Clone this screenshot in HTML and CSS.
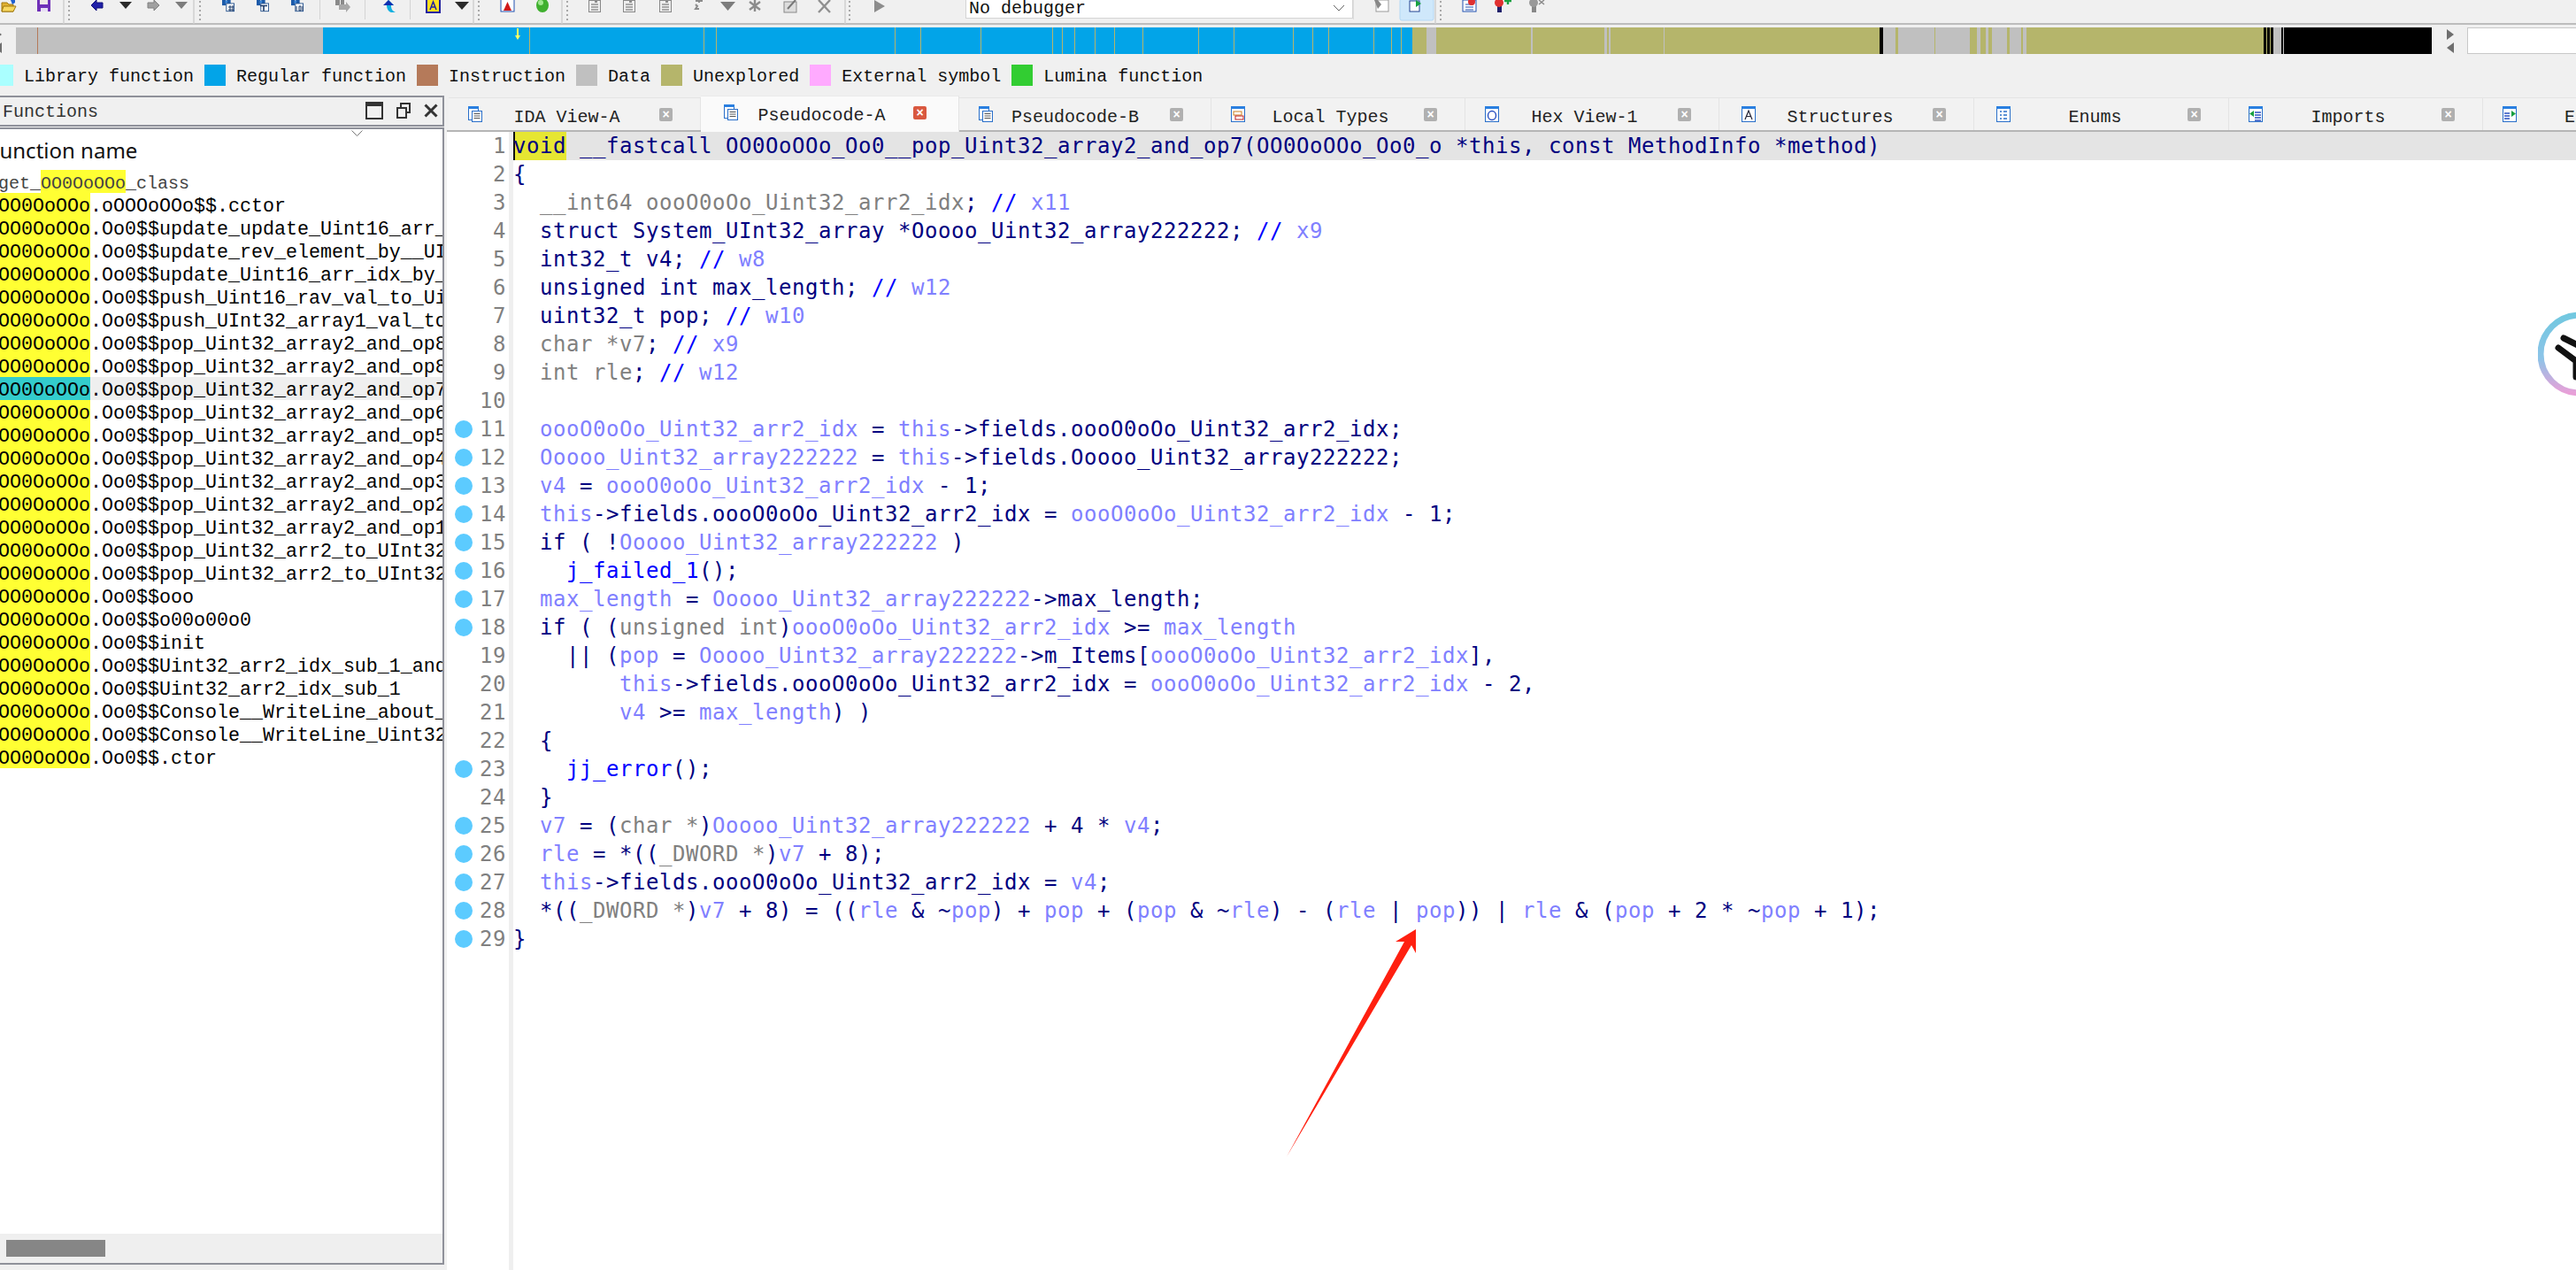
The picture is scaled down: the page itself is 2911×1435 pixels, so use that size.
FILE: index.html
```html
<!DOCTYPE html>
<html lang="en">
<head>
<meta charset="utf-8">
<title>IDA - Pseudocode-A</title>
<link rel="stylesheet" href="styles.css">
</head>
<body>
<svg class="defs" width="0" height="0">
  <symbol id="doc" viewBox="0 0 16 18">
    <rect x=".5" y=".5" width="11" height="15" fill="#fff" stroke="#2a6fc9"/>
    <rect x="0" y="0" width="12" height="3" fill="#2a7fe0"/>
    <rect x="4.5" y="5.5" width="11" height="12" fill="#fff" stroke="#2a6fc9"/>
    <path d="M6.5 8.5h7M6.5 11h7M6.5 13.5h7" stroke="#555" fill="none"/>
  </symbol>
  <symbol id="types" viewBox="0 0 16 18">
    <rect x=".5" y=".5" width="15" height="17" fill="#fff" stroke="#2a6fc9"/>
    <rect x="0" y="0" width="16" height="3" fill="#2a7fe0"/>
    <rect x="3" y="6" width="9" height="4" fill="#fff" stroke="#d08020"/>
    <rect x="5" y="11" width="9" height="4" fill="#fff" stroke="#c02020"/>
  </symbol>
  <symbol id="hex" viewBox="0 0 16 18">
    <rect x=".5" y=".5" width="15" height="17" fill="#fff" stroke="#2a6fc9"/>
    <rect x="0" y="0" width="16" height="3" fill="#2a7fe0"/>
    <ellipse cx="8" cy="10.5" rx="4.5" ry="5" fill="none" stroke="#2a50c0" stroke-width="1.4"/>
  </symbol>
  <symbol id="struct" viewBox="0 0 16 18">
    <rect x=".5" y=".5" width="15" height="17" fill="#fff" stroke="#2a6fc9"/>
    <rect x="0" y="0" width="16" height="3" fill="#2a7fe0"/>
    <path d="M4 15L8 5l4 10M5.5 11.5h5" fill="none" stroke="#223" stroke-width="1.2"/>
  </symbol>
  <symbol id="enum" viewBox="0 0 16 18">
    <rect x=".5" y=".5" width="15" height="17" fill="#fff" stroke="#2a6fc9"/>
    <rect x="0" y="0" width="16" height="3" fill="#2a7fe0"/>
    <path d="M4 6h2M4 10h2M4 14h2M8 6h4M8 10h4M8 14h4" stroke="#2a6fc9" stroke-width="1.3"/>
  </symbol>
  <symbol id="imp" viewBox="0 0 16 18">
    <rect x=".5" y=".5" width="15" height="17" fill="#fff" stroke="#2a6fc9"/>
    <rect x="0" y="0" width="16" height="3" fill="#2a7fe0"/>
    <path d="M7 7h7M7 10h7M7 13h7M7 16h7" stroke="#2a50c0" stroke-width="1.3"/>
    <path d="M6 5v7L1 8.5z" fill="#18a040"/>
  </symbol>
  <symbol id="exp" viewBox="0 0 16 18">
    <rect x=".5" y=".5" width="15" height="17" fill="#fff" stroke="#2a6fc9"/>
    <rect x="0" y="0" width="16" height="3" fill="#2a7fe0"/>
    <path d="M2 8h6M2 11h6M2 14h6" stroke="#2a50c0" stroke-width="1.3"/>
    <path d="M10 5v7l5-3.5z" fill="#18a040"/>
  </symbol>
  <symbol id="bino" viewBox="0 0 16 16">
    <rect x="0" y="0" width="5" height="7" fill="#1c5aa8"/>
    <rect x="6" y="0" width="5" height="7" fill="#1c5aa8"/>
    <rect x="4" y="1" width="3" height="3" fill="#3a86d8"/>
    <rect x="5.5" y="4.5" width="10" height="10" fill="#fff" stroke="#1c4a88"/>
  </symbol>
  <symbol id="gbox" viewBox="0 0 18 22">
    <rect x="1.5" y="7.5" width="13" height="13" fill="#eee" stroke="#888"/>
    <path d="M8 1h3v3h3v3h-3v3H8V7H5V4h3z" fill="#8c8c8c"/>
    <path d="M4 12h8M4 15h8M4 18h8" stroke="#666"/>
  </symbol>
</svg>

<header class="toolbar">
  <svg class="tb-icons tb-left" viewBox="0 0 1091 27" width="1091" height="27">
    <path d="M2 3h6l2 2h5v8H2z" fill="#e0b030" stroke="#a07810"/>
    <path d="M4 7h14l-3 6H2z" fill="#f8d860" stroke="#a07810"/>
    <path d="M12 0h5v3l-3 2z" fill="#2060d0"/>
    <path d="M42 0h15v13H42z" fill="#7030b8"/><path d="M45 0h9v5h-9z" fill="#f0e8e8"/><path d="M46 9h8v4h-8z" fill="#e8e0f4"/>
    <path d="M72 0v27M219 0v27M535 0v27M635 0v27M955 0v27" stroke="#cfcfcf" stroke-width="1.5"/>
    <path d="M78 1v23M226 1v23M541 1v23M641 1v23M960 1v23" stroke="#a8a8a8" stroke-width="2" stroke-dasharray="2 3"/>
    <path d="M361.5 0v22M412.5 0v22M463.5 0v22" stroke="#d4d4d4"/>
    <path d="M103 6l6-6v3h7v6h-7v3z" fill="#2020a8" stroke="#10107a"/>
    <path d="M135 2h14l-7 8z" fill="#2a2a2a"/>
    <path d="M180 6l-6-6v3h-7v6h7v3z" fill="#a0a0a0" stroke="#808080"/>
    <path d="M198 2h14l-7 8z" fill="#7c7c7c"/>
    <use href="#bino" x="250" y="0" width="16" height="14"/>
    <path d="M258 8h6M258 11h6M260 6v7M263 6v7" stroke="#1c3a68"/>
    <use href="#bino" x="289" y="0" width="16" height="14"/>
    <path d="M294 6.500h8M298 6.500v6" stroke="#1c3a68" stroke-width="1.6" fill="none"/>
    <use href="#bino" x="328" y="0" width="16" height="14"/>
    <path d="M335 7v5M338 7h2v5h-2zM342 7v5" stroke="#1c3a68" fill="none"/>
    <path d="M379 0h5v6h-5zM385 0h4v6h-4z" fill="#8a8a8a"/><path d="M383 5h8V2l5 6-5 6v-3h-8z" fill="#a8a8a8"/>
    <path d="M439 0l6 6h-3c0 4 1 6 5 8h-5c-3-1-5-4-5-8h-3z" fill="#12b0e0"/>
    <path d="M439 0l6 6h-12z" fill="#1030b0"/>
    <rect x="482" y="-2" width="15" height="16" fill="#ffe020" stroke="#2020a0" stroke-width="2"/>
    <path d="M486 11l3.500-9 3.500 9M487.500 8h4" fill="none" stroke="#2020a0" stroke-width="1.5"/>
    <path d="M514 2h16l-8 9z" fill="#2a2a2a"/>
    <rect x="566" y="-1" width="15" height="14" fill="#fff" stroke="#2050b0"/>
    <path d="M569 12l4.500-10 4.500 10z" fill="#d01818"/>
    <ellipse cx="613" cy="6" rx="7" ry="8" fill="#40b030"/><ellipse cx="611" cy="3" rx="3" ry="3" fill="#a0e890"/>
    <use href="#gbox" x="664" y="-7" width="18" height="22"/>
    <use href="#gbox" x="703" y="-7" width="18" height="22"/>
    <use href="#gbox" x="744" y="-7" width="18" height="22"/>
    <path d="M790 0v3M786 1h8M786 5l2 2-2 3h4" stroke="#8c8c8c" stroke-width="2" fill="none"/>
    <path d="M814 2h17l-8.500 10z" fill="#7c7c7c"/>
    <path d="M853 0v13M847 2l12 9M859 2l-12 9" stroke="#8c8c8c" stroke-width="2.4"/>
    <rect x="886" y="2" width="14" height="12" fill="#ddd" stroke="#888"/><path d="M890 10L899 0" stroke="#777" stroke-width="2"/>
    <path d="M925 0l13 14M938 0L925 14" stroke="#909090" stroke-width="2.4"/>
    <path d="M988 0l12 7-12 7z" fill="#8c8c8c"/>
  </svg>
  <div class="dbg-select"><span>No debugger</span><svg width="14" height="9" viewBox="0 0 14 9"><path d="M1 1l6 6 6-6" fill="none" stroke="#666"/></svg></div>
  <svg class="tb-icons tb-right" viewBox="0 0 391 27" width="391" height="27">
    <path d="M.5 0v22" stroke="#ddd"/>
    <rect x="26" y="0" width="14" height="13" fill="#fff" stroke="#999"/>
    <path d="M24 0h4l4 5-4 5z" fill="#888"/>
    <rect x="53" y="-1" width="38" height="24" rx="2" fill="#cfe8fb" stroke="#b4d8f4"/>
    <rect x="64" y="1" width="11" height="12" fill="#fff" stroke="#204090"/>
    <path d="M71 0l6 4-6 4z" fill="#18a040"/>
    <path d="M93 0v27" stroke="#cfcfcf" stroke-width="1.5"/>
    <path d="M99 1v23" stroke="#a8a8a8" stroke-width="2" stroke-dasharray="2 3"/>
    <rect x="124" y="0" width="15" height="13" fill="#fff" stroke="#2050b0"/><path d="M127 5h9M127 8h9M127 11h9" stroke="#2050b0"/><circle cx="134" cy="2" r="4" fill="#e03030"/>
    <rect x="163" y="0" width="5" height="14" fill="#20206a"/><circle cx="165" cy="3" r="5" fill="#e03030"/><path d="M171 1h8M175-3v8" stroke="#18a040" stroke-width="2.4"/>
    <rect x="202" y="0" width="5" height="14" fill="#888"/><circle cx="204" cy="3" r="5" fill="#999"/><path d="M210 0l6 5M216 0l-6 5" stroke="#888" stroke-width="1.4"/>
  </svg>
</header>

<section class="nav-row">
  <div class="nav-arrows nav-arrows-left">
    <i class="tri tri-r"></i><i class="tri tri-l"></i>
  </div>
  <div class="nav-bar">
    <span class="g" style="width:24px"></span><span class="i" style="width:1px"></span><span class="g" style="width:322px"></span>
    <span class="b" style="width:233px"></span><span class="o" style="width:1px"></span><span class="b" style="width:196px"></span><span class="o" style="width:1px"></span><span class="b" style="width:13px"></span><span class="o" style="width:1px"></span>
    <span class="b" style="width:201px"></span><span class="o" style="width:1px"></span><span class="b" style="width:28px"></span><span class="o" style="width:1px"></span><span class="b" style="width:67px"></span><span class="o" style="width:1px"></span><span class="b" style="width:80px"></span><span class="o" style="width:1px"></span><span class="b" style="width:10px"></span><span class="o" style="width:1px"></span><span class="b" style="width:13px"></span><span class="o" style="width:1px"></span><span class="b" style="width:22px"></span><span class="o" style="width:1px"></span><span class="b" style="width:21px"></span><span class="o" style="width:1px"></span><span class="b" style="width:31px"></span><span class="o" style="width:1px"></span><span class="b" style="width:62px"></span><span class="o" style="width:1px"></span><span class="b" style="width:39px"></span><span class="o" style="width:1px"></span><span class="b" style="width:66px"></span><span class="o" style="width:1px"></span><span class="b" style="width:21px"></span><span class="o" style="width:1px"></span><span class="b" style="width:17px"></span><span class="o" style="width:1px"></span><span class="b" style="width:50px"></span><span class="o" style="width:1px"></span><span class="b" style="width:19px"></span><span class="o" style="width:1px"></span><span class="b" style="width:10px"></span><span class="o" style="width:1px"></span><span class="b" style="width:12px"></span>
    <span class="o" style="width:16px"></span><span class="g" style="width:11px"></span><span class="o" style="width:107px"></span><span class="g" style="width:2px"></span><span class="o" style="width:81px"></span><span class="g" style="width:3px"></span><span class="o" style="width:2px"></span><span class="g" style="width:2px"></span><span class="o" style="width:60px"></span><span class="g" style="width:1px"></span><span class="o" style="width:243px"></span>
    <span class="k" style="width:4px"></span><span class="g" style="width:14px"></span><span class="o" style="width:3px"></span><span class="g" style="width:41px"></span><span class="o" style="width:1px"></span><span class="g" style="width:39px"></span><span class="o" style="width:8px"></span><span class="g" style="width:4px"></span><span class="o" style="width:6px"></span><span class="g" style="width:3px"></span><span class="o" style="width:4px"></span><span class="g" style="width:17px"></span><span class="o" style="width:3px"></span><span class="g" style="width:13px"></span><span class="o" style="width:2px"></span><span class="g" style="width:4px"></span><span class="o" style="width:268px"></span>
    <span class="k" style="width:3px"></span><span class="o" style="width:1px"></span><span class="k" style="width:3px"></span><span class="o" style="width:1px"></span><span class="k" style="width:3px"></span><span class="g" style="width:9px"></span><span class="k" style="width:2px"></span><span class="g" style="width:1px"></span><span class="k" style="width:167px"></span>
    <svg class="nav-mark" width="6" height="14" viewBox="0 0 6 14"><path d="M3 0v9" stroke="#ffff66" stroke-width="2"/><path d="M0 8h6l-3 5z" fill="#ffff66"/></svg>
  </div>
  <div class="nav-arrows nav-arrows-right">
    <i class="tri tri-r"></i><i class="tri tri-l"></i>
  </div>
  <div class="nav-input"></div>
</section>

<section class="legend">
  <i class="sw lib"></i><span>Library function</span>
  <i class="sw reg"></i><span>Regular function</span>
  <i class="sw ins"></i><span>Instruction</span>
  <i class="sw dat"></i><span>Data</span>
  <i class="sw une"></i><span>Unexplored</span>
  <i class="sw ext"></i><span>External symbol</span>
  <i class="sw lum"></i><span>Lumina function</span>
</section>

<main class="workspace">
  <aside class="fn-panel">
    <div class="fn-title">
      <span class="fn-title-text">Functions</span>
      <div class="fn-btns">
        <svg width="20" height="20" viewBox="0 0 20 20"><rect x="1" y="1" width="18" height="18" fill="none" stroke="#333" stroke-width="2"/><rect x="1" y="1" width="18" height="4" fill="#333"/></svg>
        <svg width="16" height="18" viewBox="0 0 16 18"><path d="M5 6V1h10v10h-4" fill="none" stroke="#333" stroke-width="2"/><rect x="1" y="6" width="10" height="11" fill="none" stroke="#333" stroke-width="2"/></svg>
        <svg width="16" height="16" viewBox="0 0 16 16"><path d="M1.5 1.5l13 13M14.5 1.5l-13 13" stroke="#333" stroke-width="3"/></svg>
      </div>
    </div>
    <div class="fn-box">
      <div class="fn-head"><span>Function name</span><svg class="fn-chev" width="13" height="7" viewBox="0 0 13 7"><path d="M.5.5l6 6 6-6" fill="none" stroke="#777"/></svg></div>
      <div class="fn-list">
        <div class="fn-row fn-thin">get_<b class="hit">OO0OoOOo</b>_class</div>
        <div class="fn-row"><b class="hit">OO0OoOOo</b>.oOOOoOOo$$.cctor</div>
        <div class="fn-row"><b class="hit">OO0OoOOo</b>.Oo0$$update_update_Uint16_arr_</div>
        <div class="fn-row"><b class="hit">OO0OoOOo</b>.Oo0$$update_rev_element_by__UI</div>
        <div class="fn-row"><b class="hit">OO0OoOOo</b>.Oo0$$update_Uint16_arr_idx_by_</div>
        <div class="fn-row"><b class="hit">OO0OoOOo</b>.Oo0$$push_Uint16_rav_val_to_Ui</div>
        <div class="fn-row"><b class="hit">OO0OoOOo</b>.Oo0$$push_UInt32_array1_val_to</div>
        <div class="fn-row"><b class="hit">OO0OoOOo</b>.Oo0$$pop_Uint32_array2_and_op8</div>
        <div class="fn-row"><b class="hit">OO0OoOOo</b>.Oo0$$pop_Uint32_array2_and_op8</div>
        <div class="fn-row fn-sel"><b class="hit">OO0OoOOo</b>.Oo0$$pop_Uint32_array2_and_op7</div>
        <div class="fn-row"><b class="hit">OO0OoOOo</b>.Oo0$$pop_Uint32_array2_and_op6</div>
        <div class="fn-row"><b class="hit">OO0OoOOo</b>.Oo0$$pop_Uint32_array2_and_op5</div>
        <div class="fn-row"><b class="hit">OO0OoOOo</b>.Oo0$$pop_Uint32_array2_and_op4</div>
        <div class="fn-row"><b class="hit">OO0OoOOo</b>.Oo0$$pop_Uint32_array2_and_op3</div>
        <div class="fn-row"><b class="hit">OO0OoOOo</b>.Oo0$$pop_Uint32_array2_and_op2</div>
        <div class="fn-row"><b class="hit">OO0OoOOo</b>.Oo0$$pop_Uint32_array2_and_op1</div>
        <div class="fn-row"><b class="hit">OO0OoOOo</b>.Oo0$$pop_Uint32_arr2_to_UInt32</div>
        <div class="fn-row"><b class="hit">OO0OoOOo</b>.Oo0$$pop_Uint32_arr2_to_UInt32</div>
        <div class="fn-row"><b class="hit">OO0OoOOo</b>.Oo0$$ooo</div>
        <div class="fn-row"><b class="hit">OO0OoOOo</b>.Oo0$$o00o00o0</div>
        <div class="fn-row"><b class="hit">OO0OoOOo</b>.Oo0$$init</div>
        <div class="fn-row"><b class="hit">OO0OoOOo</b>.Oo0$$Uint32_arr2_idx_sub_1_and</div>
        <div class="fn-row"><b class="hit">OO0OoOOo</b>.Oo0$$Uint32_arr2_idx_sub_1</div>
        <div class="fn-row"><b class="hit">OO0OoOOo</b>.Oo0$$Console__WriteLine_about_</div>
        <div class="fn-row"><b class="hit">OO0OoOOo</b>.Oo0$$Console__WriteLine_Uint32</div>
        <div class="fn-row"><b class="hit">OO0OoOOo</b>.Oo0$$.ctor</div>
      </div>
      <div class="fn-scroll"><i class="fn-thumb"></i></div>
    </div>
  </aside>

  <section class="editor">
    <nav class="tabs">
      <div class="tab t-a"><svg class="tab-ic"><use href="#doc"/></svg><span class="tab-label">IDA View-A</span><i class="tab-x">×</i></div>
      <div class="tab t-b tab-on"><svg class="tab-ic"><use href="#doc"/></svg><span class="tab-label">Pseudocode-A</span><i class="tab-x tab-x-on">×</i></div>
      <div class="tab t-c"><svg class="tab-ic"><use href="#doc"/></svg><span class="tab-label">Pseudocode-B</span><i class="tab-x">×</i></div>
      <div class="tab"><svg class="tab-ic"><use href="#types"/></svg><span class="tab-label">Local Types</span><i class="tab-x">×</i></div>
      <div class="tab"><svg class="tab-ic"><use href="#hex"/></svg><span class="tab-label">Hex View-1</span><i class="tab-x">×</i></div>
      <div class="tab t-d"><svg class="tab-ic"><use href="#struct"/></svg><span class="tab-label">Structures</span><i class="tab-x">×</i></div>
      <div class="tab t-d"><svg class="tab-ic"><use href="#enum"/></svg><span class="tab-label">Enums</span><i class="tab-x">×</i></div>
      <div class="tab"><svg class="tab-ic"><use href="#imp"/></svg><span class="tab-label">Imports</span><i class="tab-x">×</i></div>
      <div class="tab tab-last"><svg class="tab-ic"><use href="#exp"/></svg><span class="tab-label-cut">Exports</span></div>
    </nav>
    <div class="code">
      <div class="gutter">
        <div class="gl"><span>1</span></div>
        <div class="gl"><span>2</span></div>
        <div class="gl"><span>3</span></div>
        <div class="gl"><span>4</span></div>
        <div class="gl"><span>5</span></div>
        <div class="gl"><span>6</span></div>
        <div class="gl"><span>7</span></div>
        <div class="gl"><span>8</span></div>
        <div class="gl"><span>9</span></div>
        <div class="gl"><span>10</span></div>
        <div class="gl"><i class="bp"></i><span>11</span></div>
        <div class="gl"><i class="bp"></i><span>12</span></div>
        <div class="gl"><i class="bp"></i><span>13</span></div>
        <div class="gl"><i class="bp"></i><span>14</span></div>
        <div class="gl"><i class="bp"></i><span>15</span></div>
        <div class="gl"><i class="bp"></i><span>16</span></div>
        <div class="gl"><i class="bp"></i><span>17</span></div>
        <div class="gl"><i class="bp"></i><span>18</span></div>
        <div class="gl"><span>19</span></div>
        <div class="gl"><span>20</span></div>
        <div class="gl"><span>21</span></div>
        <div class="gl"><span>22</span></div>
        <div class="gl"><i class="bp"></i><span>23</span></div>
        <div class="gl"><span>24</span></div>
        <div class="gl"><i class="bp"></i><span>25</span></div>
        <div class="gl"><i class="bp"></i><span>26</span></div>
        <div class="gl"><i class="bp"></i><span>27</span></div>
        <div class="gl"><i class="bp"></i><span>28</span></div>
        <div class="gl"><i class="bp"></i><span>29</span></div>
      </div>
      <div class="src">
<div class="sl sl-cur"><mark class="kw-hl">void</mark> __fastcall OO0OoOOo_Oo0__pop_Uint32_array2_and_op7(OO0OoOOo_Oo0_o *this, const MethodInfo *method)</div>
<div class="sl">{</div>
<div class="sl">  <u class="g">__int64 oooO0oOo_Uint32_arr2_idx</u>; <u class="c">//</u> <u class="v">x11</u></div>
<div class="sl">  struct System_UInt32_array *Ooooo_Uint32_array222222; <u class="c">//</u> <u class="v">x9</u></div>
<div class="sl">  int32_t v4; <u class="c">//</u> <u class="v">w8</u></div>
<div class="sl">  unsigned int max_length; <u class="c">//</u> <u class="v">w12</u></div>
<div class="sl">  uint32_t pop; <u class="c">//</u> <u class="v">w10</u></div>
<div class="sl">  <u class="g">char *v7</u>; <u class="c">//</u> <u class="v">x9</u></div>
<div class="sl">  <u class="g">int rle</u>; <u class="c">//</u> <u class="v">w12</u></div>
<div class="sl"> </div>
<div class="sl">  <u class="v">oooO0oOo_Uint32_arr2_idx</u> = <u class="v">this</u>-&gt;fields.oooO0oOo_Uint32_arr2_idx;</div>
<div class="sl">  <u class="v">Ooooo_Uint32_array222222</u> = <u class="v">this</u>-&gt;fields.Ooooo_Uint32_array222222;</div>
<div class="sl">  <u class="v">v4</u> = <u class="v">oooO0oOo_Uint32_arr2_idx</u> - 1;</div>
<div class="sl">  <u class="v">this</u>-&gt;fields.oooO0oOo_Uint32_arr2_idx = <u class="v">oooO0oOo_Uint32_arr2_idx</u> - 1;</div>
<div class="sl">  if ( !<u class="v">Ooooo_Uint32_array222222</u> )</div>
<div class="sl">    <u class="f">j_failed_1</u>();</div>
<div class="sl">  <u class="v">max_length</u> = <u class="v">Ooooo_Uint32_array222222</u>-&gt;max_length;</div>
<div class="sl">  if ( (<u class="g">unsigned int</u>)<u class="v">oooO0oOo_Uint32_arr2_idx</u> &gt;= <u class="v">max_length</u></div>
<div class="sl">    || (<u class="v">pop</u> = <u class="v">Ooooo_Uint32_array222222</u>-&gt;m_Items[<u class="v">oooO0oOo_Uint32_arr2_idx</u>],</div>
<div class="sl">        <u class="v">this</u>-&gt;fields.oooO0oOo_Uint32_arr2_idx = <u class="v">oooO0oOo_Uint32_arr2_idx</u> - 2,</div>
<div class="sl">        <u class="v">v4</u> &gt;= <u class="v">max_length</u>) )</div>
<div class="sl">  {</div>
<div class="sl">    <u class="f">jj_error</u>();</div>
<div class="sl">  }</div>
<div class="sl">  <u class="v">v7</u> = (<u class="g">char *</u>)<u class="v">Ooooo_Uint32_array222222</u> + 4 * <u class="v">v4</u>;</div>
<div class="sl">  <u class="v">rle</u> = *((<u class="g">_DWORD *</u>)<u class="v">v7</u> + 8);</div>
<div class="sl">  <u class="v">this</u>-&gt;fields.oooO0oOo_Uint32_arr2_idx = <u class="v">v4</u>;</div>
<div class="sl">  *((<u class="g">_DWORD *</u>)<u class="v">v7</u> + 8) = ((<u class="v">rle</u> &amp; ~<u class="v">pop</u>) + <u class="v">pop</u> + (<u class="v">pop</u> &amp; ~<u class="v">rle</u>) - (<u class="v">rle</u> | <u class="v">pop</u>)) | <u class="v">rle</u> &amp; (<u class="v">pop</u> + 2 * ~<u class="v">pop</u> + 1);</div>
<div class="sl">}</div>
      </div>
    </div>
  </section>
</main>

<svg class="red-arrow" width="160" height="270" viewBox="1450 1045 160 270"><polygon points="1600,1050 1577,1064 1587,1064 1454,1307 1595,1068 1600,1077" fill="#ff2010"/></svg>
<svg class="float-badge" width="43" height="100" viewBox="2868 350 43 100">
  <defs><linearGradient id="ring" x1="0" y1="0" x2="0" y2="1"><stop offset="0" stop-color="#72c8e0"/><stop offset=".55" stop-color="#8cc4e8"/><stop offset="1" stop-color="#e8a0d8"/></linearGradient></defs>
  <circle cx="2915" cy="400" r="44" fill="#fff" stroke="url(#ring)" stroke-width="7"/>
  <path d="M2897 382l16 8M2891 393l20 15M2911 410v16" fill="none" stroke="#111" stroke-width="7" stroke-linecap="round"/>
</svg>
</body>
</html>
```
FILE: styles.css
```css
* { box-sizing: border-box; }
html, body { margin: 0; padding: 0; }
body {
  position: relative;
  width: 2911px;
  height: 1435px;
  overflow: hidden;
  background: #f0f0f0;
  font-family: "Liberation Mono", monospace;
  font-size: 20px;
  color: #111;
}
.defs { position: absolute; }

/* toolbar */
.toolbar {
  display: flex;
  height: 28px;
  border-bottom: 2px solid #bdbdbd;
}
.tb-icons { display: block; flex: none; }
.dbg-select {
  flex: none;
  width: 438px;
  height: 21px;
  background: #fff;
  border: 1px solid #d4d4d4;
  border-top: 0;
  display: flex;
  justify-content: space-between;
  align-items: center;
  padding: 0 8px 1px 3px;
  line-height: 18px;
}

/* navigation band */
.nav-row {
  display: flex;
  height: 30px;
  margin-top: 3px;
}
.nav-arrows {
  flex: none;
  display: flex;
  flex-direction: column;
  justify-content: center;
  gap: 3px;
}
.nav-arrows-left { width: 24px; margin-left: -6px; overflow: hidden; }
.nav-arrows-right { width: 39px; padding-left: 16px; }
.tri { display: block; width: 0; height: 0; border-top: 6px solid transparent; border-bottom: 6px solid transparent; }
.tri-r { border-left: 8px solid #6e6e6e; }
.tri-l { border-right: 8px solid #6e6e6e; }
.nav-bar {
  position: relative;
  flex: none;
  width: 2731px;
  height: 30px;
  display: flex;
  overflow: hidden;
}
.nav-bar span { display: block; flex: none; height: 100%; }
.nav-bar .g { background: #c0c0c0; }
.nav-bar .i { background: #b57a5a; }
.nav-bar .b { background: #02a4e8; }
.nav-bar .o { background: #b5b56b; }
.nav-bar .k { background: #000; }
.nav-mark { position: absolute; left: 564px; top: 1px; }
.nav-input {
  flex: 1;
  background: #fff;
  border: 1px solid #c8c8c8;
  border-right: 0;
}

/* legend */
.legend {
  display: flex;
  align-items: center;
  height: 24px;
  margin: 12px 0 0 -9px;
  line-height: 24px;
  white-space: pre;
}
.legend .sw { flex: none; width: 24px; height: 24px; margin-right: 12px; }
.legend span { margin-right: 12px; margin-top: 4px; }
.lib { background: #aaffff; }
.reg { background: #02a4e8; }
.ins { background: #b57a5a; }
.dat { background: #c0c0c0; }
.une { background: #b5b56b; }
.ext { background: #ffaaff; }
.lum { background: #32cd32; }

/* workspace */
.workspace {
  display: flex;
  height: 1327px;
  margin-top: 11px;
}
.fn-panel {
  flex: none;
  width: 502px;
  height: 1321px;
  display: flex;
  flex-direction: column;
  gap: 1px;
}
.fn-title {
  flex: none;
  height: 35px;
  display: flex;
  align-items: center;
  justify-content: space-between;
  padding: 0 5px 2px 3px;
  border: 2px solid #8f919a;
  border-left: 0;
  color: #333;
}
.fn-title-text { margin-top: 4px; }
.fn-btns { display: flex; align-items: center; gap: 15px; }
.fn-box {
  flex: 1;
  min-height: 0;
  display: flex;
  flex-direction: column;
  background: #fff;
  border: 2px solid #8f919a;
  border-left: 0;
}
.fn-head {
  position: relative;
  flex: none;
  height: 46px;
  padding-top: 6px;
  margin-left: -13px;
  font-family: "Noto Sans", sans-serif;
  font-size: 24px;
  line-height: 36px;
  color: #111;
}
.fn-chev { position: absolute; left: 410px; top: 1px; }
.fn-list { flex: 1; min-height: 0; overflow: hidden; }
.fn-row {
  height: 26px;
  line-height: 31px;
  margin-left: -2px;
  font-size: 21.667px;
  white-space: pre;
  color: #000;
  overflow: hidden;
}
.fn-row .hit { font-weight: normal; background: #ffff33; display: inline-block; height: 26px; }
.fn-thin { font-size: 20px; color: #444; }
.fn-sel { background: #efefef; }
.fn-sel .hit { background: #33cccc; }
.fn-scroll {
  flex: none;
  height: 33px;
  background: #efefef;
  padding: 7px 0 0 7px;
}
.fn-thumb { display: block; width: 112px; height: 19px; background: #868686; }

/* editor */
.editor {
  flex: 1;
  min-width: 0;
  margin-left: 3px;
  display: flex;
  flex-direction: column;
}
.tabs {
  flex: none;
  display: flex;
  height: 41px;
  align-items: flex-end;
  border-bottom: 2px solid #b5b5b5;
  color: #222;
}
.tab {
  flex: none;
  width: 287px;
  height: 37px;
  display: flex;
  align-items: center;
  padding: 0 31px 0 22px;
  background: #f2f2f2;
  border-right: 1px solid #e4e4e4;
  border-top: 1px solid #e4e4e4;
}
.t-a { width: 285px; margin-left: 2px; }
.t-b { width: 292px; }
.t-c { width: 285px; }
.t-d { width: 288px; padding-left: 25px; }
.tab-on {
  height: 41px;
  margin-bottom: -2px;
  background: #fafafa;
  padding: 0 36px 4px 26px;
  border-top: 1px solid #eaeaea;
}
.tab-last { flex: 1; width: auto; padding-right: 0; border-right: 0; }
.tab-ic { flex: none; width: 16px; height: 18px; }
.tab-label { flex: 1; text-align: center; white-space: pre; padding-right: 9px; margin-top: 6px; }
.t-c .tab-label { padding-right: 14px; }
.tab-label-cut { margin-left: 54px; margin-top: 6px; white-space: pre; }
.tab-x {
  flex: none;
  width: 15px;
  height: 15px;
  border-radius: 2px;
  background: #b0b0b0;
  color: #fff;
  font-style: normal;
  font-family: "Liberation Sans", sans-serif;
  font-weight: bold;
  font-size: 14px;
  line-height: 15px;
  text-align: center;
}
.tab-x-on { background: #d9583f; }

.code {
  flex: 1;
  min-height: 0;
  display: flex;
  background: #fff;
  font-family: "DejaVu Sans Mono", monospace;
  font-size: 24px;
  letter-spacing: .55px;
  line-height: 32px;
  color: #000080;
}
.gutter {
  flex: none;
  width: 75px;
  border-right: 5px solid #efefef;
  color: #808080;
}
.gl {
  height: 32px;
  display: flex;
  align-items: center;
  padding: 0 3px 0 9px;
}
.gl span { margin-left: auto; }
.bp {
  flex: none;
  width: 20px;
  height: 20px;
  border-radius: 50%;
  background: #5ccbff;
}
.src { flex: 1; min-width: 0; }
.sl { height: 32px; white-space: pre; }
.sl-cur { background: #e4e4e4; }
.kw-hl { display: inline-block; height: 32px; color: inherit; background: #e6e632; box-shadow: inset 2px 0 0 #111; }
.src u { text-decoration: none; }
.src .v { color: #8080ff; }
.src .g { color: #808080; }
.src .c { color: #0000ff; }
.src .f { color: #0000ff; }

/* overlays */
.red-arrow { position: absolute; left: 1450px; top: 1045px; }
.float-badge { position: absolute; left: 2868px; top: 350px; }
```
